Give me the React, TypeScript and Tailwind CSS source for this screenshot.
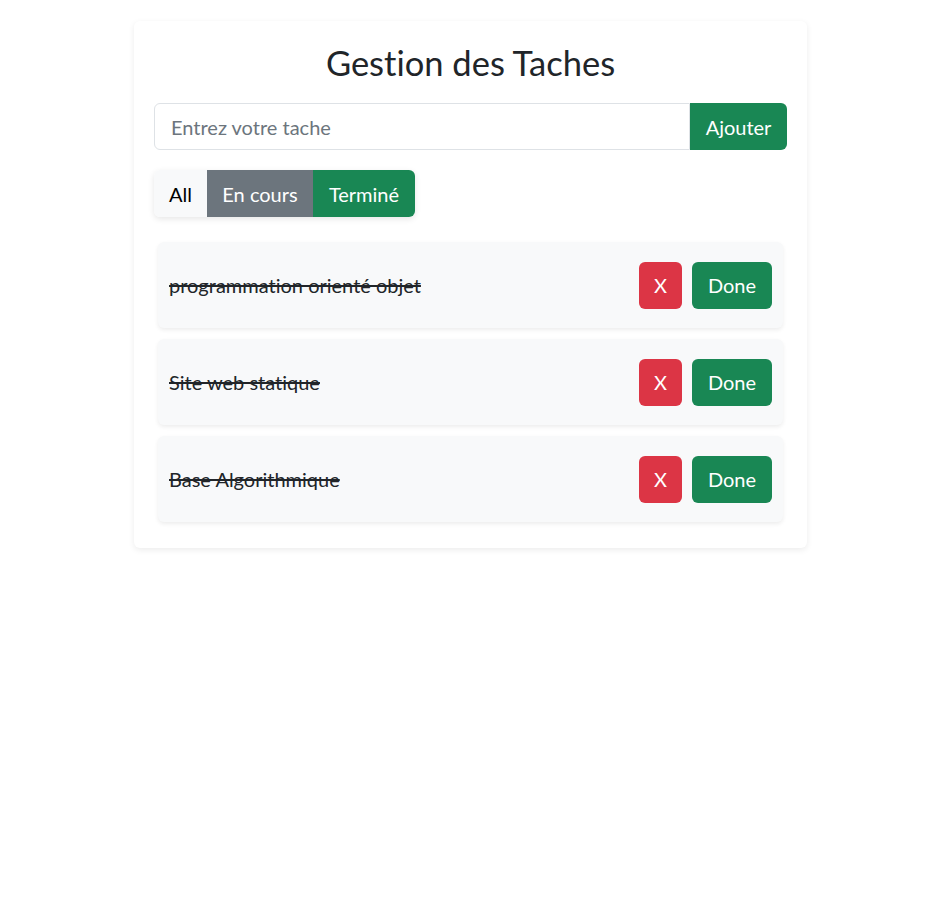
import React from "react";

const tasks = ["programmation orienté objet", "Site web statique", "Base Algorithmique"];

export default function App() {
  return (
    <div
      className="min-h-[905px] bg-white pt-[21px] text-[#212529]"
      style={{ fontFamily: "Lato, 'Noto Sans', sans-serif", fontVariantLigatures: "none" }}
    >
      <div className="mx-auto w-[673px] rounded-md bg-white p-5 pb-[26px] shadow-[0_2px_6px_rgba(0,0,0,0.08)]">
        <h2 className="mb-[21px] mt-[2px] text-center text-[34.5px] leading-[39px] font-normal">Gestion des Taches</h2>
        <div className="flex">
          <input
            className="h-[47px] flex-1 rounded-l-md border border-[#dee2e6] px-4 text-[20px] outline-none placeholder:text-[#6c757d]"
            placeholder="Entrez votre tache"
          />
          <button className="h-[47px] w-[97px] rounded-r-md bg-[#198754] text-[20px] text-white">Ajouter</button>
        </div>
        <div className="mt-5 flex">
          <div className="flex rounded-md shadow-[0_2px_6px_rgba(0,0,0,0.1)]">
            <button className="h-[47px] w-[53px] rounded-l-md bg-[#f8f9fa] text-[20px] text-black">All</button>
            <button className="h-[47px] w-[106px] bg-[#6c757d] text-[20px] text-white">En cours</button>
            <button className="h-[47px] w-[102px] rounded-r-md bg-[#198754] text-[20px] text-white">Terminé</button>
          </div>
        </div>
        <div className="mt-[25px] flex flex-col gap-[11px] px-1">
          {tasks.map((t) => (
            <div
              key={t}
              className="flex h-[86px] items-center justify-between rounded-md bg-[#f8f9fa] pl-[11px] pr-[11px] shadow-[0_2px_4px_rgba(0,0,0,0.075)]"
            >
              <span className="text-[20px] line-through">{t}</span>
              <div className="flex gap-[10px]">
                <button className="h-[47px] w-[43px] rounded-md bg-[#dc3545] text-[20px] text-white">X</button>
                <button className="h-[47px] w-[80px] rounded-md bg-[#198754] text-[20px] text-white">Done</button>
              </div>
            </div>
          ))}
        </div>
      </div>
    </div>
  );
}
